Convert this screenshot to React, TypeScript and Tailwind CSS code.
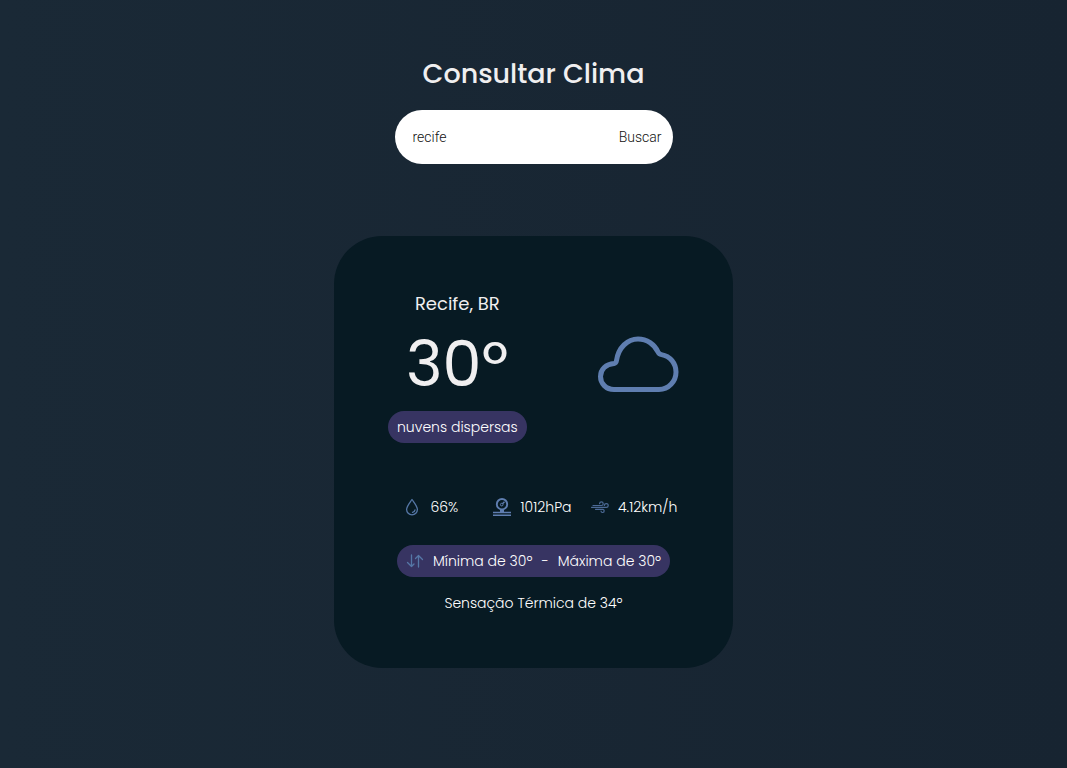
import { FormEvent, ReactNode, useState } from "react";

function CloudIcon() {
  return (
    <svg viewBox="0 0 82 56" className="h-[56px] w-[82px]" fill="none" stroke="#5f7eb0" strokeWidth="5" strokeLinejoin="round" aria-hidden="true">
      <path d="M17 27.5C18.500 27.200 19.200 26.500 19.500 24.500C21.500 11.500 30.500 3 41 3C50 3 57.500 8.500 61 16C61.800 17.700 62.700 18.300 64.500 18.600C73.200 20 79 27.500 79 36C79 45.500 71.500 53.500 62 53.500H17C9 53.500 3.500 47.500 3.500 40.500C3.500 33.500 9 28 17 27.500Z" />
    </svg>
  );
}

function DropIcon() {
  return (
    <svg viewBox="0 0 18 18" className="size-[18px] shrink-0" fill="none" stroke="#5577a6" strokeWidth="1.3" strokeLinecap="round" strokeLinejoin="round" aria-hidden="true">
      <path d="M9 1.500C7 4.500 3.600 8.200 3.600 11.500A5.400 5.400 0 0 0 14.400 11.500C14.400 8.200 11 4.500 9 1.500Z" />
      <path d="M9.500 14.300A3 3 0 0 0 12 11.800" />
    </svg>
  );
}

function GaugeIcon() {
  return (
    <svg viewBox="0 0 18 18" className="size-[18px] shrink-0" fill="none" stroke="#5f7eb0" aria-hidden="true">
      <circle cx="9" cy="6.200" r="5.200" strokeWidth="1.900" />
      <circle cx="8.700" cy="6.600" r="1.300" strokeWidth="1" />
      <path d="M9.500 5.800L11.500 3.800" strokeWidth="1.400" />
      <path d="M9 11.500V14.500" strokeWidth="4" />
      <path d="M0 14.500H18M0 17.200H18" strokeWidth="1.500" />
    </svg>
  );
}

function WindIcon() {
  return (
    <svg viewBox="0 0 18 18" className="size-[18px] shrink-0" fill="none" stroke="#4c6a96" strokeWidth="1.200" strokeLinecap="round" aria-hidden="true">
      <path d="M2 7.500H10.500A1.800 1.800 0 1 0 8.600 5.600" />
      <path d="M.6 9.400H15.200A1.900 1.900 0 1 0 13.400 7.400" />
      <path d="M4.500 11.300H11.500A1.600 1.600 0 1 1 10 13" />
    </svg>
  );
}

function ArrowsIcon() {
  return (
    <svg viewBox="0 0 18 18" className="size-[18px] shrink-0" fill="none" stroke="#5577a6" strokeWidth="1.300" strokeLinecap="round" strokeLinejoin="round" aria-hidden="true">
      <path d="M5.500 3V14.500M1.500 10.500L5.500 14.500L8 12" />
      <path d="M12.500 15V3.500M9.500 6.500L12.500 3.500L16.500 7.500" />
    </svg>
  );
}

function Stat({ icon, children }: { icon: ReactNode; children: ReactNode }) {
  return (
    <li className="flex items-center justify-center gap-[9px] whitespace-nowrap">
      {icon}
      <span>{children}</span>
    </li>
  );
}

export default function App() {
  const [city, setCity] = useState("recife");
  const submit = (event: FormEvent) => event.preventDefault();

  return (
    <main className="flex min-h-screen flex-col items-center bg-linear-to-r from-[#1a2936] to-[#172431] px-4 pt-[54px] pb-[100px] font-[Poppins,Inter,sans-serif] text-sm font-light text-white">
      <h1 className="text-[27px] leading-10 font-medium text-[#f0eff0]">Consultar Clima</h1>

      <form
        onSubmit={submit}
        className="mt-4 flex h-[54px] w-full max-w-[278px] items-center justify-between rounded-full bg-white pr-[11px] pl-[18px] font-[Roboto,Arial,sans-serif] text-[#111111]"
      >
        <input
          aria-label="Cidade"
          value={city}
          onChange={(event) => setCity(event.target.value)}
          className="w-0 min-w-0 flex-1 bg-transparent outline-none"
        />
        <button type="submit">Buscar</button>
      </form>

      <section className="mt-[72px] flex w-full max-w-[399px] flex-col items-center rounded-[48px] bg-[#071a23] px-[46px] pt-[54px] pb-[49px]">
        <div className="flex w-full items-center justify-between px-2">
          <div className="flex flex-col items-center">
            <h2 className="text-lg leading-7 font-normal text-[#f0eff0]">Recife, BR</h2>
            <p className="mt-[11px] text-[62px] leading-[72px] font-normal text-[#f0eff0]">30º</p>
            <p className="mt-[10px] rounded-full bg-[#373462] px-[9px] leading-8">nuvens dispersas</p>
          </div>
          <div className="pb-[6px]">
            <CloudIcon />
          </div>
        </div>

        <ul className="mt-12 grid w-full grid-cols-3 pr-[2px] leading-8">
          <Stat icon={<DropIcon />}>66%</Stat>
          <Stat icon={<GaugeIcon />}>1012hPa</Stat>
          <Stat icon={<WindIcon />}>4.12km/h</Stat>
        </ul>

        <div className="mt-[22px] flex items-center gap-[9px] rounded-full bg-[#373462] px-[9px] leading-8 whitespace-nowrap">
          <ArrowsIcon />
          <span>Mínima de 30º</span>
          <span>-</span>
          <span>Máxima de 30º</span>
        </div>

        <p className="mt-[10px] leading-8">Sensação Térmica de 34º</p>
      </section>
    </main>
  );
}
